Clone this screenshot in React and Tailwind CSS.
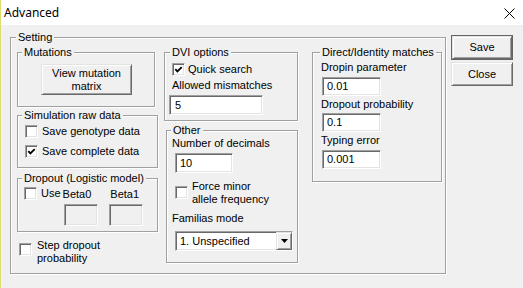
import React from 'react';

// classic Win32 3D borders
const sunken =
  'border border-t-[#a0a0a0] border-l-[#a0a0a0] border-b-white border-r-white shadow-[inset_1px_1px_0_#696969,inset_-1px_-1px_0_#e3e3e3]';
const raised =
  'border border-t-[#e3e3e3] border-l-[#e3e3e3] border-b-[#696969] border-r-[#696969] shadow-[inset_1px_1px_0_#ffffff,inset_-1px_-1px_0_#a0a0a0]';

function GroupBox({ label, className = '', labelLeft = 'left-[4px]', children }) {
  return (
    <div className={`relative border border-[#a0a0a0] shadow-[inset_1px_1px_0_#ffffff,1px_1px_0_#ffffff] ${className}`}>
      <span className={`absolute top-[-7px] ${labelLeft} bg-[#f0f0f0] px-[2px] leading-[13px] whitespace-nowrap`}>
        {label}
      </span>
      {children}
    </div>
  );
}

function Checkbox({ checked, className = '' }) {
  return (
    <span className={`block w-[13px] h-[13px] shrink-0 bg-white ${sunken} ${className}`}>
      {checked && (
        <svg width="11" height="11" viewBox="0 0 11 11" className="block">
          <path d="M2.3 5.2 L4.4 7.4 L8.7 3.1" stroke="#000" strokeWidth="1.9" fill="none" />
        </svg>
      )}
    </span>
  );
}

function TextBox({ value, className = '', disabled }) {
  return (
    <div className={`${sunken} ${disabled ? 'bg-[#f0f0f0]' : 'bg-white'} flex items-center pl-[4px] leading-[13px] ${className}`}>
      {value}
    </div>
  );
}

function CheckRow({ checked, label, className = '' }) {
  return (
    <div className={`flex items-center h-[13px] ${className}`}>
      <Checkbox checked={checked} />
      <span className="ml-[4px] leading-[13px] whitespace-nowrap">{label}</span>
    </div>
  );
}

export default function App() {
  return (
    <div className="w-[523px] h-[288px] overflow-hidden bg-[#f0f0f0] border-l border-[#dcdc72] flex flex-col text-[11px] text-black font-['Liberation_Sans',Arial,sans-serif]">
      {/* title bar */}
      <div className="h-[25px] shrink-0 bg-white flex items-center justify-between pl-[3px] pr-[8px]">
        <span className="text-[12px] leading-[16px] font-['Noto_Sans',sans-serif]">Advanced</span>
        <svg width="11" height="11" viewBox="0 0 11 11" className="block mt-[2px]">
          <path d="M0.5 0.5 L10.5 10.5 M10.5 0.5 L0.5 10.5" stroke="#000" strokeWidth="1" />
        </svg>
      </div>

      <div className="flex items-start">
        <GroupBox label="Setting" labelLeft="left-[5px]" className="ml-[9px] mt-[12px] w-[436px] h-[237px] shrink-0">
          <div className="flex pt-[14px] pl-[6px]">
            {/* left column */}
            <div className="flex flex-col w-[141px]">
              <GroupBox label="Mutations" className="w-[138px] h-[55px]">
                <div className={`${raised} bg-[#f0f0f0] mt-[11px] ml-[23px] w-[91px] h-[31px] flex flex-col items-center justify-center leading-[13px]`}>
                  <span>View mutation</span>
                  <span>matrix</span>
                </div>
              </GroupBox>

              <GroupBox label="Simulation raw data" className="mt-[8px] w-[141px] h-[53px] pt-[9px] pl-[7px]">
                <div className="flex flex-col gap-[7px]">
                  <CheckRow label="Save genotype data" />
                  <CheckRow checked label="Save complete data" />
                </div>
              </GroupBox>

              <GroupBox label="Dropout (Logistic model)" className="mt-[10px] w-[141px] h-[54px] pt-[8px] pl-[6px]">
                <div className="flex items-center h-[13px]">
                  <Checkbox />
                  <span className="ml-[4px] leading-[13px]">Use</span>
                  <span className="ml-[2px] leading-[13px] mt-[2px]">Beta0</span>
                  <span className="ml-[19px] leading-[13px] mt-[2px]">Beta1</span>
                </div>
                <div className="flex mt-[4px]">
                  <TextBox disabled className="ml-[40px] w-[34px] h-[22px]" />
                  <TextBox disabled className="ml-[11px] w-[34px] h-[22px]" />
                </div>
              </GroupBox>

              <div className="flex items-start mt-[7px] ml-[2px]">
                <Checkbox className="mt-[4px]" />
                <div className="ml-[5px] leading-[13px]">
                  <div>Step dropout</div>
                  <div>probability</div>
                </div>
              </div>
            </div>

            {/* middle column */}
            <div className="flex flex-col ml-[6px] w-[134px]">
              <GroupBox label="DVI options" labelLeft="left-[5px]" className="w-[134px] h-[69px] pt-[10px] pl-[4px]">
                <div className="flex items-center h-[13px] ml-[3px]">
                  <Checkbox checked />
                  <span className="ml-[3px] leading-[13px]">Quick search</span>
                </div>
                <div className="mt-[3px] ml-[3px] leading-[13px]">Allowed mismatches</div>
                <TextBox value="5" className="mt-[3px] w-[94px] h-[20px] pl-[5px]" />
              </GroupBox>

              <GroupBox label="Other" className="ml-[2px] mt-[9px] w-[132px] h-[133px] pt-[6px] pl-[5px]">
                <div className="leading-[13px]">Number of decimals</div>
                <TextBox value="10" className="mt-[3px] ml-[3px] w-[58px] h-[20px]" />
                <div className="flex items-start mt-[7px] ml-[3px]">
                  <Checkbox className="mt-[6px]" />
                  <div className="ml-[4px] leading-[13px]">
                    <div>Force minor</div>
                    <div>allele frequency</div>
                  </div>
                </div>
                <div className="mt-[6px] leading-[13px]">Familias mode</div>
                <div className={`${sunken} bg-white mt-[6px] ml-[3px] w-[118px] h-[20px] flex items-stretch`}>
                  <span className="flex-1 flex items-center pl-[4px] leading-[13px]">1. Unspecified</span>
                  <span className={`${raised} bg-[#f0f0f0] w-[16px] flex items-center justify-center`}>
                    <svg width="7" height="4" viewBox="0 0 7 4" className="block">
                      <path d="M0 0 H7 L3.5 4 Z" fill="#000" />
                    </svg>
                  </span>
                </div>
              </GroupBox>
            </div>

            {/* right column */}
            <div className="ml-[14px] w-[130px]">
              <GroupBox label="Direct/Identity matches" labelLeft="left-[7px]" className="w-[130px] h-[130px] pt-[8px] pl-[8px]">
                <div className="leading-[13px]">Dropin parameter</div>
                <TextBox value="0.01" className="mt-[3px] ml-[1px] w-[59px] h-[19px]" />
                <div className="mt-[2px] leading-[13px]">Dropout probability</div>
                <TextBox value="0.1" className="mt-[2px] ml-[1px] w-[59px] h-[19px]" />
                <div className="mt-[2px] leading-[13px]">Typing error</div>
                <TextBox value="0.001" className="mt-[3px] ml-[1px] w-[59px] h-[19px]" />
              </GroupBox>
            </div>
          </div>
        </GroupBox>

        {/* buttons */}
        <div className="ml-[5px] mt-[10px] flex flex-col gap-[2px]">
          <div className="border border-[#646464] w-[62px] h-[25px] flex">
            <div className={`${raised} bg-[#f0f0f0] flex-1 flex items-center justify-center leading-[13px]`}>Save</div>
          </div>
          <div className={`${raised} bg-[#f0f0f0] w-[62px] h-[24px] flex items-center justify-center leading-[13px]`}>Close</div>
        </div>
      </div>
    </div>
  );
}
